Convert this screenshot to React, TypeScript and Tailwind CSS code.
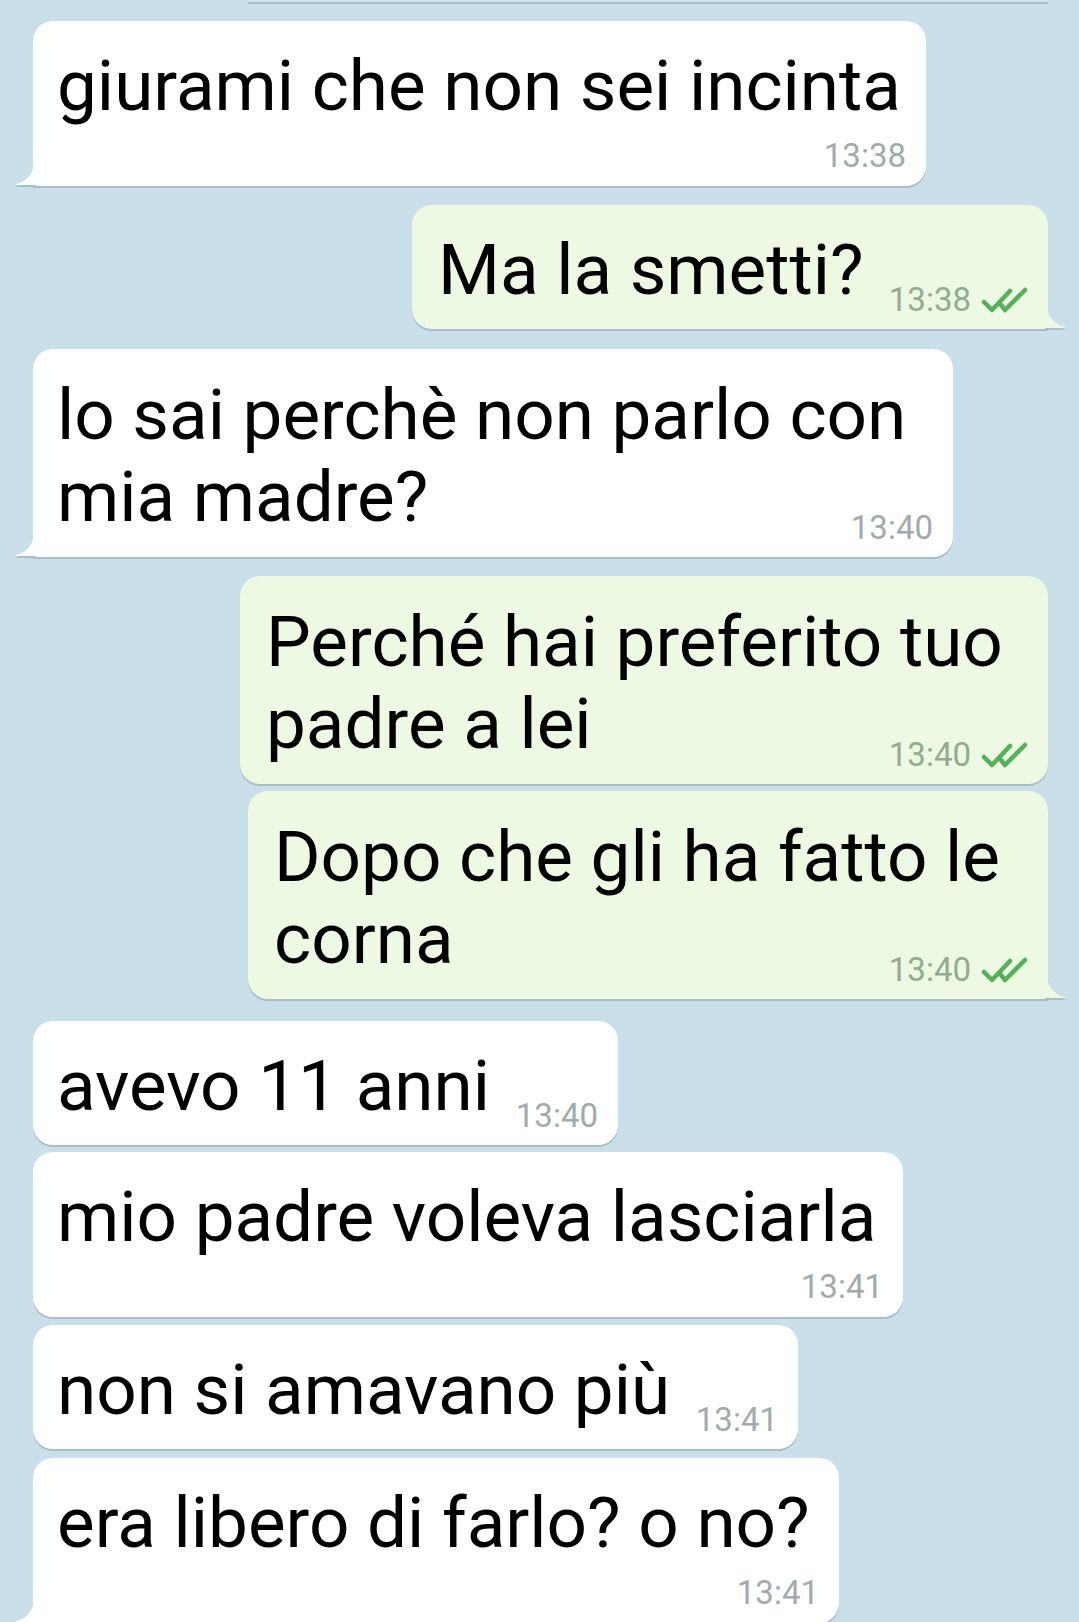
import clsx from "clsx";

interface Message {
  out?: boolean;
  lines: string[];
  time: string;
  below?: boolean;
  tail?: boolean;
  width: string;
  gap: string;
  leading: string;
}

const messages: Message[] = [
  { lines: ["giurami che non sei incinta"], time: "13:38", below: true, tail: true, width: "w-[893px]", gap: "mt-[19px]", leading: "leading-[80px]" },
  { out: true, lines: ["Ma la smetti?"], time: "13:38", tail: true, width: "w-[636px]", gap: "mt-[19px]", leading: "leading-[80px]" },
  { lines: ["lo sai perchè non parlo con", "mia madre?"], time: "13:40", tail: true, width: "w-[920px]", gap: "mt-[20px]", leading: "leading-[82px]" },
  { out: true, lines: ["Perché hai preferito tuo", "padre a lei"], time: "13:40", width: "w-[808px]", gap: "mt-[19px]", leading: "leading-[82px]" },
  { out: true, lines: ["Dopo che gli ha fatto le", "corna"], time: "13:40", tail: true, width: "w-[800px]", gap: "mt-[7px]", leading: "leading-[82px]" },
  { lines: ["avevo 11 anni"], time: "13:40", width: "w-[585px]", gap: "mt-[22px]", leading: "leading-[80px]" },
  { lines: ["mio padre voleva lasciarla"], time: "13:41", below: true, width: "w-[870px]", gap: "mt-[7px]", leading: "leading-[80px]" },
  { lines: ["non si amavano più"], time: "13:41", width: "w-[765px]", gap: "mt-[8px]", leading: "leading-[80px]" },
  { lines: ["era libero di farlo? o no?"], time: "13:41", below: true, tail: true, width: "w-[806px]", gap: "mt-[9px]", leading: "leading-[80px]" },
];

function DoubleCheck() {
  return (
    <svg width="48" height="27" viewBox="0 0 48 27" fill="none" stroke="#55b05a" strokeWidth="4.5" strokeLinecap="round" strokeLinejoin="round">
      <path d="M3 15 L11 23 L29 4" />
      <path d="M20 18 L24 23 L44 3" />
    </svg>
  );
}

function Tail({ out }: { out?: boolean }) {
  const fill = out ? "#edf9e3" : "#ffffff";
  return (
    <svg
      width="21"
      height="33"
      viewBox="0 0 21 33"
      className={clsx("absolute bottom-[-2px]", out ? "right-[-18px] -scale-x-100" : "left-[-18px]")}
    >
      <path d="M19 0 L19 6 C19 19 11 27 1 29 Q0 30 2 30 L21 30 L21 0 Z" fill="#a9bdc7" transform="translate(0 2)" />
      <path d="M19 0 L19 6 C19 19 11 27 1 29 Q0 30 2 30 L21 30 L21 0 Z" fill={fill} />
    </svg>
  );
}

function Timestamp({ msg }: { msg: Message }) {
  return (
    <span
      className={clsx(
        "flex shrink-0 items-center gap-[10px] text-[33px] leading-[32px]",
        msg.out ? "text-[#93ab92]" : "text-[#a2aaad]",
        msg.below ? "self-end mt-[14px]" : "mb-[-6px] ml-[24px]"
      )}
    >
      {msg.time}
      {msg.out && <DoubleCheck />}
    </span>
  );
}

function Bubble({ msg }: { msg: Message }) {
  const last = msg.lines.length - 1;

  return (
    <div
      className={clsx(
        "relative flex flex-col rounded-[20px] pt-[25px] shadow-[0_2px_0_#a9bdc7]",
        msg.out ? "self-end mr-[31px] bg-[#edf9e3] pl-[26px] pr-[19px]" : "ml-[33px] bg-white pl-[24px] pr-[20px]",
        msg.tail && (msg.out ? "rounded-br-none" : "rounded-bl-none"),
        msg.below ? "pb-[14px]" : "pb-[19px]",
        msg.width,
        msg.gap
      )}
    >
      {msg.lines.map((line, i) =>
        i === last && !msg.below ? (
          <div key={i} className="flex items-end justify-between">
            <span className={clsx("text-[71px] text-black", msg.leading)}>{line}</span>
            <Timestamp msg={msg} />
          </div>
        ) : (
          <div key={i} className={clsx("text-[71px] text-black", msg.leading)}>
            {line}
          </div>
        )
      )}
      {msg.below && <Timestamp msg={msg} />}
      {msg.tail && <Tail out={msg.out} />}
    </div>
  );
}

export default function App() {
  return (
    <div className="flex h-[1622px] w-[1079px] flex-col overflow-hidden bg-[#c9e0eb] font-['Roboto','Liberation_Sans',sans-serif]">
      <div className="ml-[248px] h-[2px] w-[800px] shrink-0 bg-[#cfe4ed] shadow-[0_2px_0_#a9bdc7]" />
      {messages.map((msg, i) => (
        <Bubble key={i} msg={msg} />
      ))}
    </div>
  );
}
